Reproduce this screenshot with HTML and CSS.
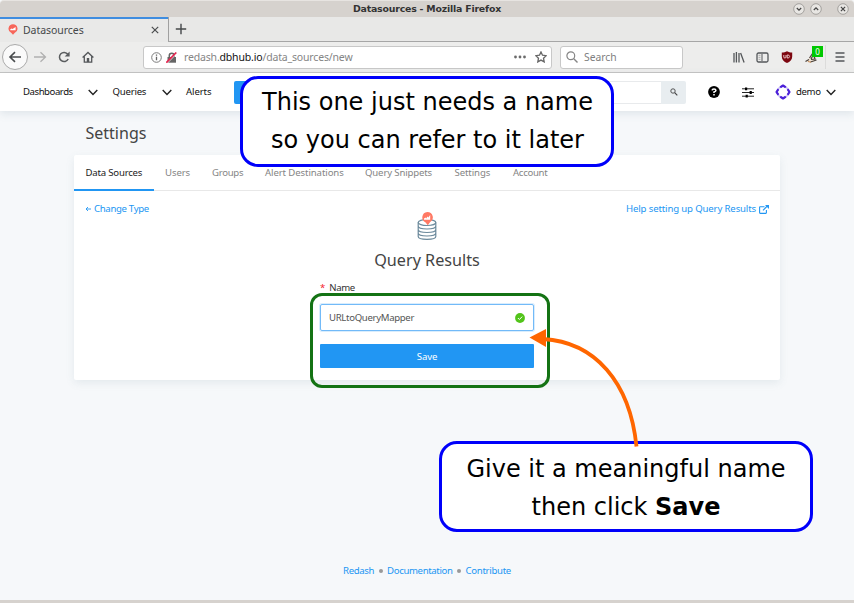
FILE: index.html
```html
<!DOCTYPE html>
<html lang="en">
<head>
<meta charset="utf-8">
<title>Datasources</title>
<link rel="stylesheet" href="styles.css">
</head>
<body>
<div class="window">
  <header class="titlebar">
    <span class="window-title">Datasources - Mozilla Firefox</span>
    <div class="window-buttons">
      <svg width="12" height="12" viewBox="0 0 12 12"><circle cx="6" cy="6" r="5.3"/><path d="M3.8 5 6 7.2 8.2 5"/></svg>
      <svg width="12" height="12" viewBox="0 0 12 12"><circle cx="6" cy="6" r="5.3"/><path d="M3.8 7 6 4.8 8.2 7"/></svg>
      <svg class="close" width="12" height="12" viewBox="0 0 12 12"><circle cx="6" cy="6" r="5.3"/><path d="m3.9 3.9 4.2 4.2m0-4.2L3.9 8.1"/></svg>
    </div>
  </header>

  <div class="tabstrip">
    <div class="browser-tab">
      <svg class="favicon" width="10" height="11" viewBox="0 0 10 11"><path d="M5 .3a4.5 4.5 0 0 1 1.6 8.7L5 10.8 3.4 9A4.5 4.5 0 0 1 5 .3Z" fill="#f7665a"/><path d="M2.3 6.3V5.2l1.2-.8 1 .6L7.6 3v3.3Z" fill="#fff"/></svg>
      <span class="tab-title">Datasources</span>
      <svg width="8" height="8" viewBox="0 0 8 8"><path d="m.8.8 6.4 6.4m0-6.4L.8 7.2" stroke="#4a4c4e" stroke-width="1.2"/></svg>
    </div>
    <div class="new-tab"><svg width="12" height="12" viewBox="0 0 12 12"><path d="M6 .8v10.4M.8 6h10.4" stroke="#45484a" stroke-width="1.4"/></svg></div>
  </div>

  <div class="toolbar">
    <div class="back"><svg width="14" height="12" viewBox="0 0 14 12"><path d="M13 6H2m5-4.8L2 6l5 4.8" fill="none" stroke="#484b4d" stroke-width="1.6"/></svg></div>
    <svg class="forward" width="13" height="12" viewBox="0 0 13 12"><path d="M0 6h11M6.5 1.2l5 4.8-5 4.8" fill="none" stroke="#b0b0b0" stroke-width="1.3"/></svg>
    <svg class="reload" width="12" height="12" viewBox="0 0 12 12"><path d="M9.8 3.3A4.6 4.6 0 1 0 10.2 8" fill="none" stroke="#5a5d5f" stroke-width="1.5"/><path d="M11.6.6v4.9H6.7Z" fill="#5a5d5f"/></svg>
    <svg class="home" width="12" height="12" viewBox="0 0 12 12"><path d="m.6 6.5 5.4-5 5.4 5M2.3 5.6v5.6h7.4V5.6" fill="none" stroke="#54575a" stroke-width="1.3"/><path d="M4.8 11V7h2.4v4Z" fill="#54575a"/></svg>
    <div class="urlbar">
      <svg class="info" width="11" height="11" viewBox="0 0 11 11"><circle cx="5.5" cy="5.5" r="4.8" fill="none" stroke="#7a7a7a"/><path d="M5.5 4.7v3.6M5.5 2.5v1.3" stroke="#666" stroke-width="1.3"/></svg>
      <svg class="lock" width="11" height="11" viewBox="0 0 11 11"><path d="M1.500 5h8.500v5.700H1.500Z" fill="#666"/><path d="M3.300 5.500V3.600a2.400 2.400 0 0 1 4.800 0v1.900" fill="none" stroke="#666" stroke-width="1.500"/><path d="M1.200 11.200 11 1.300" stroke="#fff"/><path d="M.3 10.700 10.300.5" stroke="#e42650" stroke-width="1.700"/></svg>
      <span class="url">redash.<span class="domain">dbhub.io</span>/data_sources/new</span>
      <svg class="dots" width="12" height="4" viewBox="0 0 12 4"><g fill="#6b6b6b"><circle cx="1.5" cy="2" r="1.4"/><circle cx="6" cy="2" r="1.4"/><circle cx="10.5" cy="2" r="1.4"/></g></svg>
      <svg width="12" height="12" viewBox="0 0 12 12"><path d="m6 .9 1.5 3.3 3.7.5-2.7 2.5.7 3.7L6 9.1l-3.2 1.8.7-3.7L.8 4.7l3.7-.5Z" fill="none" stroke="#666" stroke-width="1.3"/></svg>
    </div>
    <div class="searchbar">
      <svg width="12" height="12" viewBox="0 0 12 12"><circle cx="4.8" cy="4.8" r="3.9" fill="none" stroke="#858585" stroke-width="1.2"/><path d="m7.8 7.8 3.7 3.7" stroke="#858585" stroke-width="1.4"/></svg>
      <span>Search</span>
    </div>
    <div class="toolbar-icons">
      <svg class="library" width="12" height="11" viewBox="0 0 12 11"><path d="M1 1v9.500M3.400 0v10.500M6 1v9.500M7.600 1l3.500 9.400" stroke="#54575a" stroke-width="1.300"/></svg>
      <svg class="sidebar" width="13" height="11" viewBox="0 0 13 11"><rect x="1" y="1" width="11" height="9" rx="1.500" fill="none" stroke="#54575a" stroke-width="1.300"/><path d="M6 2v7" stroke="#54575a"/><path d="M2.500 3.300h2m-2 2h2m-2 2h2" stroke="#999" stroke-width=".8"/></svg>
      <svg class="shield" width="12" height="12" viewBox="0 0 12 12"><path d="M6 .2C7.500 1.200 9.300 1.400 11.200 1.400V5.800C11.200 8.800 9 10.800 6 12 3 10.800.8 8.800.8 5.800V1.400C2.700 1.400 4.500 1.200 6 .2Z" fill="#7d0710"/><path d="M2.800 4v2q0 1 1.100 1T5 6V4M6.200 4v3H7.600q2-1.500 0-3Z" fill="none" stroke="#f2d4d4" stroke-width=".9"/></svg>
      <div class="extension">
        <svg width="14" height="11" viewBox="0 0 14 11"><path d="M1 9.500 3.500 7 7 2l2-1 2.500 6.500L7.500 10Z" fill="#efe2d3"/><path d="M.5 9.500 4 7.500M4.500 6l3-4.500M6 7l2.500-4.500L10 7l-4 .5M5.500 10l6-2" fill="none" stroke="#4a413a" stroke-width="1.200"/><path d="m3 9.500 3 .8" stroke="#c8874f"/></svg>
        <span class="count">0</span>
      </div>
      <div class="menu"><svg width="10" height="10" viewBox="0 0 10 10"><path d="M.5 1h9M.5 5h9M.5 9h9" stroke="#54575a" stroke-width="1.300"/></svg></div>
    </div>
  </div>

  <nav class="app-nav">
    <span class="nav-dashboards">Dashboards</span>
    <svg class="chev" width="10" height="7" viewBox="0 0 10 7"><path d="m.7 1 4.300 4.500L9.300 1"/></svg>
    <span class="nav-queries">Queries</span>
    <svg class="chev" width="10" height="7" viewBox="0 0 10 7"><path d="m.7 1 4.300 4.500L9.300 1"/></svg>
    <span class="nav-alerts">Alerts</span>
    <span class="create"></span>
    <div class="app-search"><div class="search-field"></div><div class="search-button"><svg width="8" height="8" viewBox="0 0 8 8"><circle cx="3" cy="3" r="2.200" fill="none" stroke="#444" stroke-width=".9"/><path d="m4.700 4.700 2.600 2.600" stroke="#444" stroke-width="1.200"/></svg></div></div>
    <svg class="help" width="12" height="12" viewBox="0 0 12 12"><circle cx="6" cy="6" r="5.900"/><path d="M4.100 4.400Q4.200 3 6 3t1.900 1.400Q7.900 5.400 6 6v1M6 8v1.500" fill="none" stroke="#fff" stroke-width="1.500"/></svg>
    <svg class="sliders" width="12" height="11" viewBox="0 0 12 11"><path d="M0 1.800h12M0 5.500h12M0 9.200h12" stroke="#222"/><path d="M3 .4h2.200v2.800H3ZM7.600 4.100h2.200v2.800H7.600ZM3.600 7.800h2.200v2.800H3.600Z"/></svg>
    <svg class="avatar" width="16" height="16" viewBox="0 0 16 16"><circle cx="8" cy="8" r="5.700" fill="none" stroke="#c3b4f5" stroke-width="1.400"/><path d="M5.200 3.400 8 1.500l2.800 1.900M12.600 5.200 14.500 8l-1.900 2.800M10.800 12.600 8 14.500l-2.800-1.900M3.400 10.800 1.500 8l1.900-2.800" fill="none" stroke="#4b20d8" stroke-width="2.200" stroke-linejoin="round"/></svg>
    <span class="user">demo</span>
    <svg class="chev" width="10" height="7" viewBox="0 0 10 7"><path d="m.7 1 4.300 4.500L9.300 1"/></svg>
  </nav>

  <main class="page">
    <h1>Settings</h1>
    <section class="card">
      <div class="settings-tabs">
        <span class="st active">Data Sources</span>
        <span class="st users">Users</span>
        <span class="st groups">Groups</span>
        <span class="st alerts">Alert Destinations</span>
        <span class="st snippets">Query Snippets</span>
        <span class="st settings">Settings</span>
        <span class="st account">Account</span>
      </div>
      <div class="card-links">
        <a class="change"><svg width="6" height="6" viewBox="0 0 6 6"><path d="M6 3H1m2-2L1 3l2 2" fill="none" stroke="#2196f3" stroke-width=".9"/></svg><span>Change Type</span></a>
        <a class="help-link"><span>Help setting up Query Results</span><svg width="10" height="9" viewBox="0 0 10 9"><path d="M5.500 1.700H1.200Q.6 1.700.6 2.300v5.500q0 .6.600.6h5.600q.6 0 .6-.6V5M4 5.300 8.300 1" fill="none" stroke="#2196f3" stroke-width="1.100"/><path d="M6 0h4v4Z" fill="#2196f3"/></svg></a>
      </div>
      <div class="source">
        <svg width="20" height="28" viewBox="0 0 20 28"><g fill="none" stroke="#6c8a9c" stroke-width="1.200"><ellipse cx="10" cy="10.500" rx="8.800" ry="3"/><path d="M1.200 10.500v14C1.200 28.300 18.800 28.300 18.800 24.500v-14M1.200 14C1.200 18 18.800 18 18.800 14M1.200 17.500c0 4 17.600 4 17.600 0M1.200 21c0 4 17.600 4 17.600 0"/></g><path d="M10.300 0A5.500 5.500 0 0 1 13 10.300l-2.200 3-2.200-2.800A5.500 5.500 0 0 1 10.300 0Z" fill="#ff7964"/><path d="M7 7.800V6.500l1.500-1 .8 1 1-2 1 1L13.200 3v4.800Z" fill="#fff"/></svg>
        <h2>Query Results</h2>
      </div>
      <form class="form">
        <label><b>*</b><span>Name</span></label>
        <div class="name-input"><span>URLtoQueryMapper</span><svg width="10" height="10" viewBox="0 0 10 10"><circle cx="5" cy="5" r="4.900" fill="#52c41a"/><path d="m2.900 5 1.500 1.500L7.200 3.600" fill="none" stroke="#fff"/></svg></div>
        <div class="save">Save</div>
      </form>
    </section>
  </main>

  <footer class="footer"><a class="f-redash">Redash</a><i></i><a class="f-docs">Documentation</a><i></i><a class="f-contribute">Contribute</a></footer>
  <div class="window-edge"></div>

  <div class="highlight"></div>
  <div class="callout callout-name"><p class="c1">This one just needs a name</p><p class="c2">so you can refer to it later</p></div>
  <div class="callout callout-save"><p class="c3">Give it a meaningful name</p><p class="c4">then click <strong>Save</strong></p></div>
  <svg class="arrow" width="120" height="125" viewBox="0 0 120 125"><path d="M18 14C70 17 105 57 111.500 121.500" fill="none" stroke="#ff6600" stroke-width="3.800"/><path d="M4.500 12.500 21 4v18Z" fill="#ff6600"/></svg>
</div>
</body>
</html>
```
FILE: styles.css
```css
* { box-sizing: border-box; }
body { margin: 0; background: #f6f8fa; font: 9.6px/14px "Noto Sans", sans-serif; color: #333; }
svg { display: block; flex: none; }
span, a, p, h1, h2 { white-space: nowrap; }
.window { position: relative; width: 854px; height: 603px; overflow: hidden; display: flex; flex-direction: column; }

.titlebar { height: 17px; flex: none; background: #d6d2ce; border-top: 1px solid #e7e4e1; display: grid; grid-template-columns: 1fr auto 1fr; align-items: center; border-radius: 4px 4px 0 0; }
.window-title { grid-column: 2; font: bold 9.4px/14px "DejaVu Sans", sans-serif; letter-spacing: -.2px; color: #333; }
.window-buttons { display: flex; gap: 5px; justify-content: flex-end; padding-right: 5px; }
.window-buttons .close { margin-left: 10px; }
.window-buttons circle { fill: #e8e6e3; stroke: #969390; stroke-width: .8; }
.window-buttons path { fill: none; stroke: #444; stroke-width: 1.2; }

.tabstrip { height: 25px; flex: none; display: flex; background: #e8e8e7; }
.browser-tab { width: 168px; height: 25px; border-top: 2px solid #3f8de0; background: #e9e9e8; display: flex; align-items: center; padding: 0 9px 2px 8px; }
.tab-title { flex: 1; margin-left: 5px; font: 10.500px/14px "Noto Sans", sans-serif; color: #45484a; letter-spacing: -.05px; }
.new-tab { flex: 1; border-left: 1px solid #a0a0a0; border-bottom: 1px solid #a6a6a6; padding: 6px 0 0 6px; }

.toolbar { height: 31px; flex: none; background: #ededec; border-bottom: 1px solid #c4c4c3; display: flex; align-items: center; }
.back { width: 26px; height: 26px; margin-left: 2px; border: 1px solid #aaa; border-radius: 50%; background: #fafafa; display: flex; align-items: center; justify-content: center; }
.forward { margin-left: 6px; }
.reload { margin-left: 11px; }
.home { margin-left: 12px; }
.urlbar { width: 409px; height: 23px; margin-left: 49px; background: #fff; border: 1px solid #c8c8c8; border-radius: 3px; display: flex; align-items: center; padding: 0 4px 0 7px; color: #858585; }
.lock { margin-left: 4px; }
.url { flex: 1; margin-left: 7px; font-size: 10.500px; letter-spacing: -.17px; }
.domain { color: #111; }
.dots { margin-right: 9px; }
.searchbar { width: 123px; height: 23px; margin-left: 8px; background: #fff; border: 1px solid #c8c8c8; border-radius: 3px; display: flex; align-items: center; gap: 6px; padding-left: 5px; font-size: 10.300px; color: #808080; }
.toolbar-icons { display: flex; align-items: center; flex: 1; padding-left: 50px; }
.sidebar { margin-left: 11px; }
.shield { margin-left: 12px; }
.extension { position: relative; margin-left: 12px; }
.count { position: absolute; left: 7px; top: -6px; width: 11px; height: 11px; background: #00c800; color: #fff; font-size: 8px; line-height: 11px; text-align: center; }
.menu { margin-left: 6px; border-left: 1px solid #dcdcdb; padding: 7px 0 7px 9px; }

.app-nav { height: 38px; flex: none; background: #fff; display: flex; align-items: center; padding-left: 23px; box-shadow: 0 3px 8px rgba(100, 130, 145, .15); color: #111; letter-spacing: -.22px; }
.chev { fill: none; stroke: #222; stroke-width: 1.400; }
.nav-dashboards { width: 64.500px; letter-spacing: -.45px; }
.nav-queries { width: 49px; margin-left: 15px; }
.nav-alerts { width: 48px; margin-left: 14.500px; letter-spacing: -.1px; }
.create { width: 60px; height: 23px; background: #2196f3; border-radius: 2px 0 0 2px; }
.app-search { display: flex; width: 188px; margin-left: 204px; }
.search-field { flex: 1; height: 23px; border: 1px solid #e8eaec; border-right: 0; }
.search-button { width: 25px; height: 23px; background: #e8edf0; display: flex; align-items: center; justify-content: center; border-radius: 0 2px 2px 0; }
.help { margin-left: 22px; }
.sliders { margin-left: 22px; }
.avatar { margin-left: 21px; }
.user { margin-left: 5px; width: 30px; letter-spacing: -.35px; }

.page { padding: 12px 74px 0; }
h1 { margin: 0 0 11px 11.500px; font: 16px/21px "Noto Sans", sans-serif; color: #444; }
.card { height: 225px; background: #fff; border-radius: 2px; box-shadow: 0 3px 8px rgba(100, 130, 145, .12); }
.settings-tabs { height: 36px; border-bottom: 1px solid #e8e8e8; display: flex; color: #858585; letter-spacing: -.1px; }
.st { flex: none; height: 36px; line-height: 36px; }
.active { width: 80px; padding-left: 11.500px; color: #222; border-bottom: 2px solid #2196f3; letter-spacing: -.2px; }
.users { margin-left: 11px; width: 47px; }
.groups { width: 53px; letter-spacing: -.3px; }
.alerts { width: 100px; }
.snippets { width: 89.500px; letter-spacing: -.15px; }
.settings { width: 58.500px; }
.account { letter-spacing: -.3px; }
.card-links { display: flex; justify-content: space-between; padding: 11px 11px 0; color: #2196f3; }
.card-links a { display: flex; align-items: center; gap: 3px; }
.change { letter-spacing: -.32px; }
.help-link { letter-spacing: -.14px; }
.source { display: flex; flex-direction: column; align-items: center; margin-top: -4px; }
h2 { margin: 9px 0 0; font: 16.200px/22px "Noto Sans", sans-serif; color: #444; }
.form { width: 214px; margin: 10px auto 0 246px; }
label { display: flex; gap: 4px; }
label b { color: #f5222d; font-weight: 400; }
label span { letter-spacing: -.4px; }
.name-input { height: 27px; margin-top: 9px; padding: 0 8px; display: flex; align-items: center; justify-content: space-between; border: 1px solid #72baf8; border-radius: 2px; box-shadow: 0 0 0 1px #d9edfd; color: #555; letter-spacing: -.32px; }
.save { height: 24px; margin-top: 13px; background: #2196f3; color: #fff; text-align: center; line-height: 25px; border-radius: 1px; letter-spacing: -.15px; }

.footer { margin-top: 184px; display: flex; justify-content: center; align-items: center; color: #2196f3; letter-spacing: -.36px; }
.f-contribute { letter-spacing: -.3px; }
.footer i { width: 4px; height: 4px; border-radius: 50%; background: #999; margin: 0 4.500px; }
.window-edge { height: 3px; margin-top: auto; background: #d6d2ce; }

.highlight { position: absolute; left: 310px; top: 293px; width: 240px; height: 95px; border: 3px solid #147314; border-radius: 12px; }
.callout { position: absolute; width: 374px; height: 91px; border: 3px solid #0000fa; border-radius: 18px; background: #fff; color: #000; font: 24px/37.500px "DejaVu Sans", sans-serif; text-align: center; }
.callout p { margin: 0; }
.callout-name { left: 240px; top: 76px; padding: 5px 0 0 1px; }
.callout-save { left: 439px; top: 441px; padding-top: 7px; }
.arrow { position: absolute; left: 525px; top: 325px; }
```
